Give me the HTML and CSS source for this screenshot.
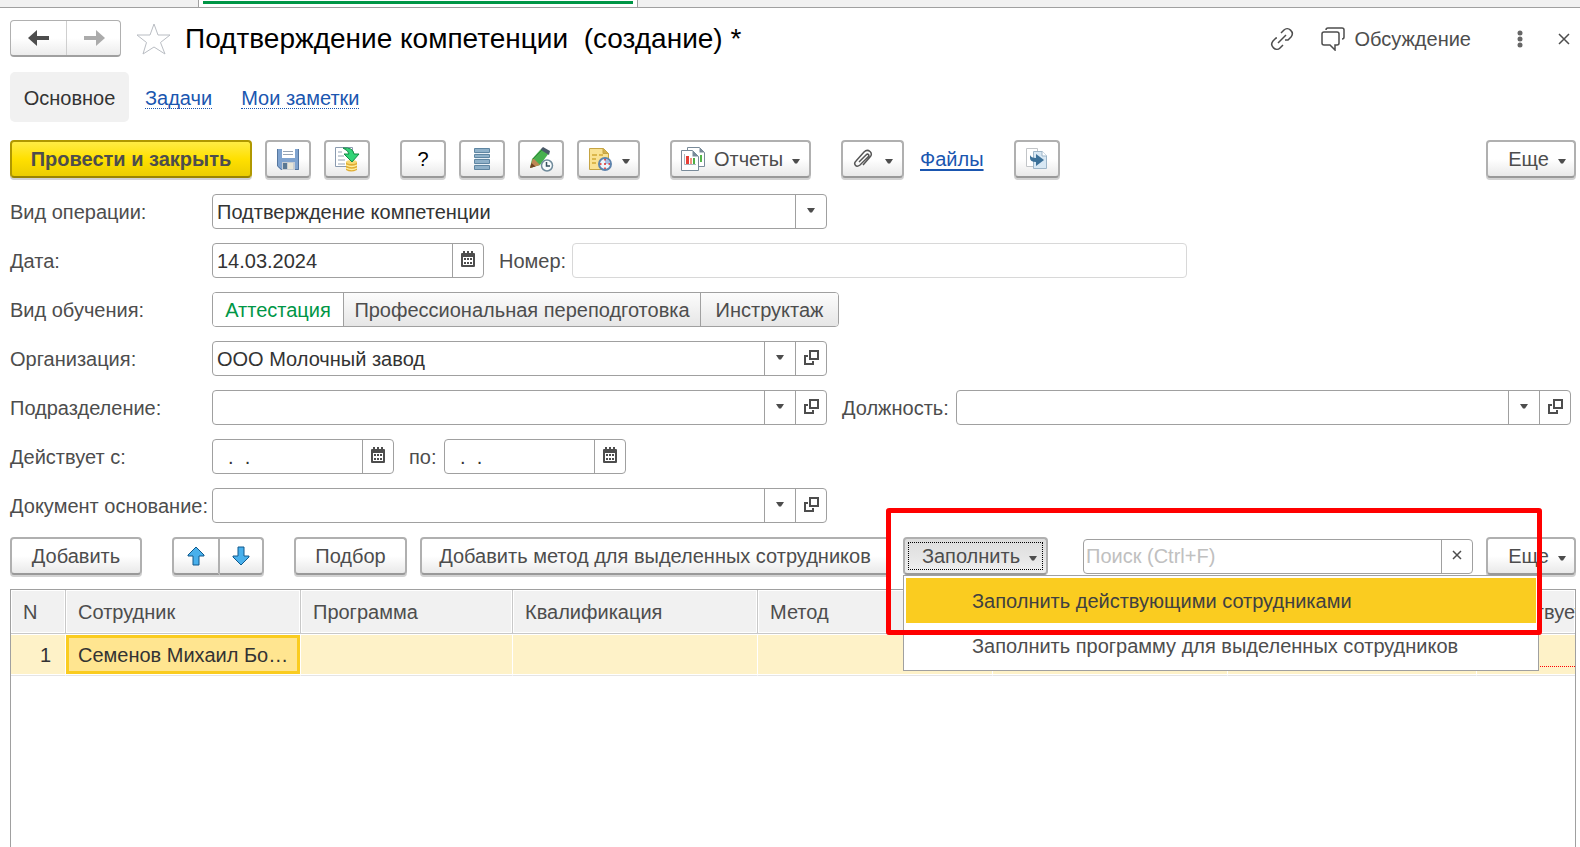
FILE: index.html
```html
<!DOCTYPE html>
<html lang="ru">
<head>
<meta charset="utf-8">
<title>Подтверждение компетенции (создание)</title>
<link rel="stylesheet" href="styles.css">
</head>
<body>
<svg class="sprite" aria-hidden="true">
  <symbol id="caret" viewBox="0 0 8 5"><path d="M0 0h8L5 4.500H3z" fill="#4d4d4d"/></symbol>
  <symbol id="calendar" viewBox="0 0 14 16"><path d="M0 3q0-1 1-1h1V0h2v2h2V0h2v2h2V0h2v2h1q1 0 1 1v12q0 1-1 1H1q-1 0-1-1z" fill="#4d4d4d"/><path d="M2 6h10v8H2z" fill="#fff"/><path d="M3 7h2v2H3zM6 7h2v2H6zM9 7h2v2H9zM3 11h2v2H3zM6 11h2v2H6zM9 11h2v2H9z" fill="#4d4d4d"/></symbol>
  <symbol id="open" viewBox="0 0 15 15"><path d="M6 1h8v8H6zM4 6H1v8h8v-3" fill="none" stroke="#4d4d4d" stroke-width="2"/></symbol>
</svg>
<div class="tabstrip"><span class="strip-side strip-left"></span><span class="strip-tab"></span><span class="strip-side strip-right"></span></div>
<main class="page">
  <header class="header">
    <div class="history">
      <button type="button" aria-label="Назад"><svg width="22" height="16" viewBox="0 0 22 16"><path d="M0 8l9-8v6h12v4H9v6z" fill="#4d4d4d"/></svg></button>
      <button type="button" aria-label="Вперед"><svg width="22" height="16" viewBox="0 0 22 16"><path d="M22 8l-9-8v6H1v4h12v6z" fill="#ababab"/></svg></button>
    </div>
    <button type="button" class="plain star" aria-label="В избранное"><svg width="36" height="34" viewBox="0 0 36 34"><path d="M18 2l4 11h12l-9.500 7.500L29 32l-11-7-11 7 3.500-11.500L1 13h13z" fill="#fff" stroke="#b9bdc3"/></svg></button>
    <h1>Подтверждение компетенции&nbsp; (создание) *</h1>
    <div class="header-tools">
      <button type="button" class="plain" aria-label="Ссылка"><svg width="24" height="24" viewBox="0 0 24 24" fill="none" stroke="#4d4d4d" stroke-width="1.500"><path d="M8 16l8-8M11 6l3-3c4-4 11 2 7 7l-3 3h-3M13 18l-3 3c-4 4-11-2-7-7l3-3h1"/></svg></button>
      <button type="button" class="plain discuss"><svg width="24" height="24" viewBox="0 0 24 24" fill="none" stroke="#4d4d4d" stroke-width="1.500"><path d="M5 3q0-2 2-2h14q2 0 2 2v7q0 2-2 2"/><path d="M3 5h13q2 0 2 2v9q0 2-2 2h-2v5l-5-5H3q-2 0-2-2V7q0-2 2-2z"/></svg><span>Обсуждение</span></button>
      <button type="button" class="plain dots" aria-label="Меню"><svg width="6" height="18" viewBox="0 0 6 18" fill="#666"><circle cx="3" cy="3" r="2.500"/><circle cx="3" cy="9" r="2.500"/><circle cx="3" cy="15" r="2.500"/></svg></button>
      <button type="button" class="plain" aria-label="Закрыть"><svg width="12" height="12" viewBox="0 0 12 12"><path d="M1 1l10 10M11 1L1 11" stroke="#4d4d4d" stroke-width="1.500"/></svg></button>
    </div>
  </header>
  <nav class="sections">
    <span class="current">Основное</span>
    <a href="#tasks">Задачи</a>
    <a href="#notes">Мои заметки</a>
  </nav>
  <div class="toolbar main-tools">
    <button type="button" class="btn primary">Провести и закрыть</button>
    <button type="button" class="btn icon" aria-label="Записать"><svg width="24" height="24" viewBox="0 0 24 24"><path d="M1 2h22v21H5l-4-4z" fill="#7fa3cf"/><path d="M1.500 2v17l4 3.500h17V2" fill="none" stroke="#56779f"/><path d="M6 2h13v9H6z" fill="#fff"/><path d="M7 4.500h10M7 7.500h10" stroke="#96a4b5"/><path d="M6 15h13v8H6z" fill="#c9ced3"/><path d="M7 16h4v6H7z" fill="#5a7893"/><path d="M12 16h5v6h-5z" fill="#e8e6d8"/></svg></button>
    <button type="button" class="btn icon" aria-label="Провести"><svg width="26" height="26" viewBox="0 0 26 26"><path d="M1.500 1.500h17v19h-17z" fill="#fff" stroke="#8b9bb0"/><path d="M4 6h4M4 10h6M4 14h7M4 18h7" stroke="#94a3b5"/><path d="M12 16h11v8q-6 3-11 0z" fill="#e0ad33"/><ellipse cx="17.500" cy="16" rx="5.500" ry="2" fill="#f6d873"/><path d="M12 19q6 3 11 0M12 22q6 3 11 0" fill="none" stroke="#fff0a0" stroke-width="1.300"/><path d="M9 2q10-1 11 6h5l-7 8-8-8h5q0-3-6-6z" fill="#31d477" stroke="#118a45"/></svg></button>
    <button type="button" class="btn icon help" aria-label="Справка">?</button>
    <button type="button" class="btn icon list" aria-label="Список"><svg width="16" height="22" viewBox="0 0 16 22"><path d="M1 0h14v22H1z" fill="#e6eff5"/><path d="M.5 .5h15v4H.5zM.5 6.500h15v3H.5zM.5 11.500h15v4H.5zM.5 17.500h15v4H.5z" fill="#8fb1c9" stroke="#5f86a2"/></svg></button>
    <button type="button" class="btn icon" aria-label="Изменить"><svg width="25" height="25" viewBox="0 0 25 25"><path d="M1 21l2-9 9-10 8 4-9 12z" fill="#48b14e"/><path d="M12 2l2-2 7 4-1 4-8-5z" fill="#4a5968"/><path d="M1 21l3-10 7 7z" fill="#bd8854"/><path d="M1 21l1.500-5 4 3.500z" fill="#704326"/><path d="M4 12l9-9" stroke="#2c8738"/><circle cx="18" cy="18.500" r="5.500" fill="#f7fbfd" stroke="#708b9b" stroke-width="1.500"/><path d="M17.500 15v4H21" fill="none" stroke="#35505f" stroke-width="1.500"/></svg></button>
    <button type="button" class="btn split" aria-label="Отложить"><svg width="24" height="24" viewBox="0 0 24 24"><path d="M1.500 1.500h14l5 5v16h-19z" fill="#f9e293" stroke="#c6a443"/><path d="M15 1.500v5h5.500" fill="#d1af4b" stroke="#c6a443"/><path d="M4 8h5M11 8h4M4 12h4M4 16h4" stroke="#d1a936" stroke-width="1.500"/><circle cx="17" cy="17" r="6" fill="#eef5fb" stroke="#5d83ad" stroke-width="2"/><path d="M17 17v-5a5 5 0 015 5z" fill="#a9bfe4"/><path d="M17 12v1.500M17 20.500V22M12 17h1.500M20.500 17H22M16 17h2" stroke="#e02525" stroke-width="1.500"/></svg><svg class="caret"><use href="#caret"/></svg></button>
    <button type="button" class="btn reports"><svg width="24" height="24" viewBox="0 0 24 24"><path d="M6.500.5h12l5 5v14h-17z" fill="#fff" stroke="#788a99"/><path d="M18.500.5v5h5z" fill="#788a99"/><path d="M20 8v7" stroke="#54b54a" stroke-width="2"/><path d="M.5 3.500h11l6 6v14H.5z" fill="#fff" stroke="#788a99"/><path d="M11.500 3.500v6h6z" fill="#788a99"/><path d="M3.500 7v10.500H15" fill="none" stroke="#abb5bd"/><path d="M5 9h3v8H5z" fill="#e63e36"/><path d="M9 11h2v6H9z" fill="#f39282"/><path d="M12 11h2v6h-2z" fill="#4eae45"/></svg><span>Отчеты</span><svg class="caret"><use href="#caret"/></svg></button>
    <button type="button" class="btn attach" aria-label="Присоединить"><svg width="20" height="20" viewBox="0 0 20 20"><path d="M6 13l7-7c2-2 4 0 2 2l-8 8c-4 3-7-1-4-4l8-9c4-4 10 1 6 5l-7 8" fill="none" stroke="#555" stroke-width="1.500"/></svg><svg class="caret"><use href="#caret"/></svg></button>
    <a class="files" href="#files">Файлы</a>
    <button type="button" class="btn icon transfer" aria-label="Перейти"><svg width="24" height="24" viewBox="0 0 24 24"><path d="M1.500 1.500h11v18h-11z" fill="#fff" stroke="#c2c5c8"/><path d="M8.500 4.500h9l4 4v13h-13z" fill="#d8e8f4" stroke="#9db5c8"/><path d="M17 4v5h5" fill="#fff" stroke="#9db5c8"/><path d="M5 8v3q0 4 6 4v4l8-6-8-6v4q-5 0-6-3z" fill="#3c7199"/></svg></button>
    <button type="button" class="btn more">Еще<svg class="caret"><use href="#caret"/></svg></button>
  </div>
  <form class="form">
    <label for="operation">Вид операции:</label>
    <div class="field">
      <select id="operation"><option>Подтверждение компетенции</option></select>
      <span class="cell"><svg class="caret"><use href="#caret"/></svg></span>
    </div>
    <label class="row-start" for="date">Дата:</label>
    <div class="line">
      <div class="field date-long"><input id="date" type="text" value="14.03.2024"><button type="button" class="cell" aria-label="Выбрать дату"><svg class="cal"><use href="#calendar"/></svg></button></div>
      <label class="number-label" for="number">Номер:</label>
      <div class="field number"><input id="number" type="text"></div>
    </div>
    <span class="row-start" id="kind">Вид обучения:</span>
    <div class="line">
      <div class="segments" role="radiogroup" aria-labelledby="kind">
        <label class="seg-short"><input type="radio" name="kind" checked>Аттестация</label>
        <label class="seg-long"><input type="radio" name="kind">Профессиональная переподготовка</label>
        <label class="seg-mid"><input type="radio" name="kind">Инструктаж</label>
      </div>
    </div>
    <label class="row-start" for="org">Организация:</label>
    <div class="field"><input id="org" type="text" value="ООО Молочный завод"><button type="button" class="cell" aria-label="Выбрать"><svg class="caret"><use href="#caret"/></svg></button><button type="button" class="cell" aria-label="Открыть"><svg class="open"><use href="#open"/></svg></button></div>
    <label class="row-start" for="dept">Подразделение:</label>
    <div class="field"><input id="dept" type="text"><button type="button" class="cell" aria-label="Выбрать"><svg class="caret"><use href="#caret"/></svg></button><button type="button" class="cell" aria-label="Открыть"><svg class="open"><use href="#open"/></svg></button></div>
    <label class="second" for="post">Должность:</label>
    <div class="field"><input id="post" type="text"><button type="button" class="cell" aria-label="Выбрать"><svg class="caret"><use href="#caret"/></svg></button><button type="button" class="cell" aria-label="Открыть"><svg class="open"><use href="#open"/></svg></button></div>
    <label class="row-start" for="from">Действует с:</label>
    <div class="line">
      <div class="field date"><input id="from" type="text" value="  .  ."><button type="button" class="cell" aria-label="Выбрать дату"><svg class="cal"><use href="#calendar"/></svg></button></div>
      <label class="until" for="to">по:</label>
      <div class="field date"><input id="to" type="text" value="  .  ."><button type="button" class="cell" aria-label="Выбрать дату"><svg class="cal"><use href="#calendar"/></svg></button></div>
    </div>
    <label class="row-start" for="basis">Документ основание:</label>
    <div class="field"><input id="basis" type="text"><button type="button" class="cell" aria-label="Выбрать"><svg class="caret"><use href="#caret"/></svg></button><button type="button" class="cell" aria-label="Открыть"><svg class="open"><use href="#open"/></svg></button></div>
  </form>
  <div class="toolbar table-tools">
    <button type="button" class="btn add">Добавить</button>
    <div class="pair">
      <button type="button" class="btn" aria-label="Вверх"><svg width="18" height="20" viewBox="0 0 18 20"><path d="M9 1l8 8v1h-5v9H6v-9H1V9z" fill="#49b0ec" stroke="#10598c" stroke-linejoin="round"/></svg></button>
      <button type="button" class="btn" aria-label="Вниз"><svg width="18" height="20" viewBox="0 0 18 20"><path d="M9 19l8-8v-1h-5V1H6v9H1v1z" fill="#49b0ec" stroke="#10598c" stroke-linejoin="round"/></svg></button>
    </div>
    <button type="button" class="btn pick">Подбор</button>
    <button type="button" class="btn method">Добавить метод для выделенных сотрудников</button>
    <div class="fill">
      <button type="button" class="btn pressed"><span>Заполнить</span><svg class="caret"><use href="#caret"/></svg></button>
      <div class="menu" role="menu">
        <button type="button" role="menuitem" class="active">Заполнить действующими сотрудниками</button>
        <button type="button" role="menuitem">Заполнить программу для выделенных сотрудников</button>
      </div>
      <div class="frame"></div>
    </div>
    <div class="field search"><input type="text" placeholder="Поиск (Ctrl+F)" aria-label="Поиск"><button type="button" class="cell" aria-label="Очистить"><svg width="10" height="10" viewBox="0 0 10 10"><path d="M1 1l8 8M9 1L1 9" stroke="#4d4d4d" stroke-width="1.500"/></svg></button></div>
    <button type="button" class="btn more">Еще<svg class="caret"><use href="#caret"/></svg></button>
  </div>
  <div class="grid">
    <table>
      <colgroup><col class="c-n"><col class="c-a"><col class="c-b"><col class="c-c"><col class="c-a"><col class="c-a"><col class="c-d"><col></colgroup>
      <thead><tr><th>N</th><th>Сотрудник</th><th>Программа</th><th>Квалификация</th><th>Метод</th><th></th><th></th><th>Действует</th></tr></thead>
      <tbody><tr><td class="num">1</td><td class="selected">Семенов Михаил Бо…</td><td></td><td></td><td></td><td></td><td></td><td><div class="required"></div></td></tr></tbody>
    </table>
  </div>
</main>
</body>
</html>
```
FILE: styles.css
```css
* { box-sizing: border-box; }
body {
  margin: 0;
  height: 100vh;
  display: flex;
  flex-direction: column;
  overflow: hidden;
  background: #fff;
  color: #4d4d4d;
  font: 20px/24px "Liberation Sans", Arial, sans-serif;
}
button, input, select { font: inherit; color: inherit; margin: 0; }
svg { display: block; flex: none; }
.sprite { position: absolute; width: 0; height: 0; }
.caret { width: 8px; height: 5px; }
.btn .caret { margin-top: 4px; }
.cal { width: 14px; height: 16px; }
.open { width: 15px; height: 15px; }

.tabstrip { display: flex; flex: none; height: 8px; border-bottom: 1px solid #a0a0a0; }
.strip-side { background: #f1f1f1; }
.strip-left { width: 199px; border-right: 1px solid #a0a0a0; }
.strip-right { flex: 1; border-left: 1px solid #a0a0a0; }
.strip-tab { width: 438px; margin-top: 1px; border: solid #fff; border-width: 0 4px; height: 3px; background: #009646; background-clip: padding-box; }

.page { flex: 1; display: flex; flex-direction: column; min-height: 0; padding: 12px 4px 0 10px; }
.header { display: flex; align-items: center; height: 37px; }
.history { display: flex; height: 37px; border: 1px solid #b0b0b0; border-bottom: 2px solid #a0a0a0; border-radius: 4px; background: linear-gradient(#fff 50%, #ececec); }
.history button { width: 53px; border: 0; padding: 0; background: none; display: flex; align-items: center; justify-content: center; }
.history button:first-child { width: 56px; border-right: 1px solid #cfcfcf; }
.plain { border: 0; background: none; padding: 0; display: flex; align-items: center; }
.star { margin: 0 13px 0 15px; }
h1 { margin: 0; color: #000; font-size: 28px; line-height: 36px; font-weight: 400; white-space: nowrap; }
.header-tools { display: flex; align-items: center; margin-left: auto; padding-right: 6px; }
.discuss { gap: 9px; margin-left: 27px; }
.dots { margin: 0 35px 0 46px; }

.sections { display: flex; align-items: center; gap: 29px; height: 50px; margin-top: 15px; }
.current { width: 119px; padding: 14px 0 12px; margin-right: -13px; border-radius: 5px; background: #f1f1f1; color: #333; text-align: center; }
a { color: #1a56b0; }
.sections a { margin-top: 2px; text-decoration: none; line-height: 20px; border-bottom: 1px dotted #1a56b0; }

.toolbar { display: flex; align-items: center; }
.btn {
  height: 38px;
  padding: 0;
  flex: none;
  display: flex;
  align-items: center;
  justify-content: center;
  white-space: nowrap;
  border: 2px solid #b0b0b0;
  border-bottom-color: #999;
  border-radius: 4px;
  background: linear-gradient(#fff 50%, #e9e9e9);
  box-shadow: 0 2px #d2d2d2;
}
.main-tools { margin-top: 18px; }
.primary { width: 242px; font-weight: 700; border-color: #b09800; border-bottom-color: #998400; background: linear-gradient(#ffec45, #ffe000 50%, #ebcd00); }
.icon { width: 46px; margin-left: 13px; }
.help { margin-left: 30px; color: #000; }
.split { width: 63px; margin-left: 13px; gap: 10px; }
.reports { width: 141px; margin-left: 30px; gap: 9px; }
.attach { width: 63px; margin-left: 30px; gap: 12px; }
.files { width: 77px; margin-left: 16px; text-underline-offset: 3px; }
.transfer { margin-left: 17px; }
.more { width: 90px; margin-left: auto; padding-left: 12px; gap: 9px; }

.form {
  display: grid;
  grid-template-columns: 202px minmax(0, 1fr) 129px minmax(0, 1fr);
  grid-auto-rows: 35px;
  row-gap: 14px;
  align-items: center;
  margin: 16px 5px 0 0;
}
.row-start { grid-column: 1; }
.line { grid-column: 2 / -1; display: flex; align-items: center; }
.second { padding-left: 15px; }
.field { display: flex; height: 35px; min-width: 0; border: 1px solid #a0a0a0; border-radius: 4px; background: #fff; overflow: hidden; }
.field input, .field select { flex: 1; min-width: 0; width: 100%; border: 0; padding: 0 0 0 4px; background: none; color: #333; outline: 0; appearance: none; }
.cell { flex: none; width: 31px; display: flex; align-items: center; justify-content: center; border: 0; border-left: 1px solid #a0a0a0; padding: 0 0 3px; background: none; }
.date-long { width: 272px; margin-right: 15px; }
.number-label { width: 73px; }
.number { flex: 0 1 615px; border-color: #d8d8d8; }
.date { width: 182px; }
.until { width: 35px; margin-left: 15px; }
.segments { display: flex; height: 35px; border: 1px solid #a0a0a0; border-radius: 4px; overflow: hidden; }
.segments label { display: flex; align-items: center; justify-content: center; white-space: nowrap; background: linear-gradient(#fcfcfc, #e6e6e6); }
.segments label + label { border-left: 1px solid #a0a0a0; }
.segments label:has(:checked) { background: #fff; color: #009646; }
.segments input { position: absolute; opacity: 0; pointer-events: none; }
.seg-short { width: 130px; }
.seg-long { width: 357px; }
.seg-mid { width: 138px; }

.table-tools { margin-top: 14px; }
.add { width: 132px; }
.pair { display: flex; margin: 0 30px; }
.pair .btn { width: 48px; border-radius: 4px 0 0 4px; }
.pair .btn + .btn { border-left: 0; width: 44px; border-radius: 0 4px 4px 0; }
.pick { width: 113px; }
.method { width: 470px; margin-left: 13px; }
.fill { position: relative; flex: none; margin-left: 13px; }
.pressed { width: 145px; padding-left: 8px; gap: 9px; background: linear-gradient(#dcdcdc, #efefef); outline: 1px dotted #000; outline-offset: -6px; box-shadow: none; }
.menu { position: absolute; z-index: 2; left: 0; top: 38px; width: 636px; padding: 2px; border: 1px solid #a0a0a0; background: #fff; }
.menu button { display: block; width: 100%; height: 45px; padding: 0 0 0 66px; border: 0; background: none; text-align: left; white-space: nowrap; }
.menu .active { background: #facc20; color: #404040; }
.frame { position: absolute; z-index: 3; left: -17px; top: -29px; width: 656px; height: 127px; border: 5px solid #f00; border-radius: 3px; pointer-events: none; }
.search { flex: 0 1 390px; margin: 0 13px 0 35px; }
.search input { padding-left: 2px; }
.search input::placeholder { color: #c0c0c0; opacity: 1; }

.grid { flex: 1; margin-top: 14px; border: 1px solid #a0a0a0; border-bottom: 0; overflow: hidden; }
table { width: 100%; table-layout: fixed; border-collapse: separate; border-spacing: 0; }
.c-n { width: 55px; }
.c-a { width: 235px; }
.c-b { width: 212px; }
.c-c { width: 245px; }
.c-d { width: 249px; }
th, td { padding: 0 0 0 12px; text-align: left; font-weight: 400; white-space: nowrap; overflow: hidden; }
th { height: 44px; background: #f1f1f1; border: solid #c8c8c8; border-width: 0 1px 1px 0; box-shadow: inset 0 0 0 1px #fff; }
td { height: 42px; background: #fef2c8; border: solid #fff; border-width: 1px 1px 1px 0; border-bottom-color: #e5e5e5; box-shadow: inset 0 -1px #fff; color: #333; }
th:last-child, td:last-child { border-right: 0; }
.num { padding: 0 14px 0 0; text-align: right; }
.selected { background: #ffe590; box-shadow: inset 0 -1px #fff, inset 0 -4px #facc20, inset 0 0 0 3px #facc20; }
.required { height: 24px; margin-left: -12px; border-bottom: 1px dotted #f00; }
```
